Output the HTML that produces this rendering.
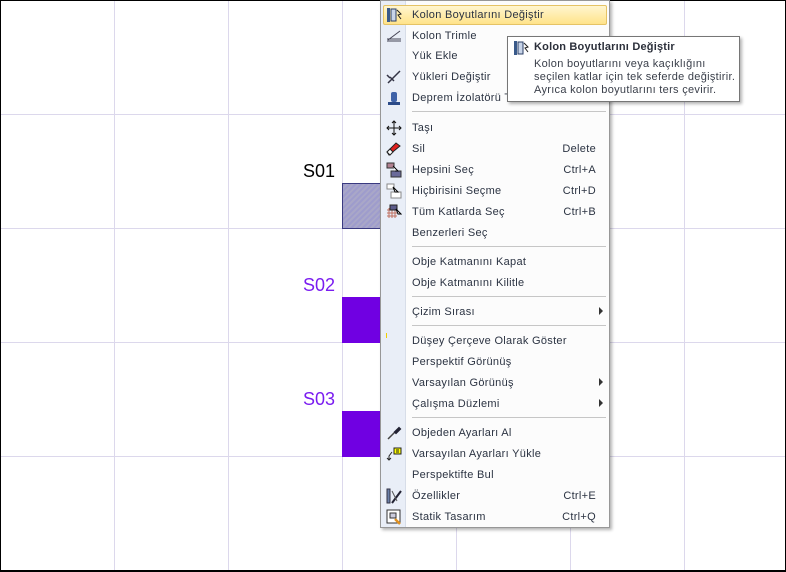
<!DOCTYPE html>
<html><head><meta charset="utf-8"><style>
*{margin:0;padding:0;box-sizing:border-box}
body{width:786px;height:572px;position:relative;overflow:hidden;background:#fff;font-family:"Segoe UI","Liberation Sans",sans-serif}
.frame{position:absolute;left:0;top:0;width:786px;height:572px;border:1px solid #000;border-bottom:2px solid #000}
.v{position:absolute;top:0;width:1px;height:572px;background:#dcd8ec}
.h{position:absolute;left:0;height:1px;width:786px;background:#dcd8ec}
.lbl{position:absolute;font-family:"Liberation Sans",sans-serif;font-size:18px}
.col{position:absolute;left:342px;width:40px;height:46px}
.menu{position:absolute;left:380px;top:0;width:230px;height:528px;background:#fcfcfc;border:1px solid #979797;box-shadow:2px 2px 3px rgba(0,0,0,.3)}
.gut{position:absolute;left:0;top:0;width:25px;height:100%;background:#e9eef7;border-right:1px solid #d7dde8}
.it{position:absolute;left:31px;font-size:11px;color:#2b3342;line-height:14px;font-family:"Liberation Sans",sans-serif;letter-spacing:0.3px}
.sc{position:absolute;right:13px;font-size:11px;color:#2b3342;line-height:14px;font-family:"Liberation Sans",sans-serif;letter-spacing:0.3px}
.sep{position:absolute;left:31px;right:3px;height:1px;background:#c6c6c6}
.arr{position:absolute;right:6px;width:0;height:0;border-left:4px solid #333;border-top:4px solid transparent;border-bottom:4px solid transparent}
.ic{position:absolute;left:5px;width:16px;height:16px}
.tip{position:absolute;left:507px;top:36px;width:233px;height:66px;background:#fff;border:1px solid #767676;box-shadow:2px 2px 3px rgba(0,0,0,.3);font-family:"Liberation Sans",sans-serif;font-size:11px;color:#3a3f4a;letter-spacing:0.3px}
</style></head><body>
<div class="v" style="left:114px"></div><div class="v" style="left:228px"></div><div class="v" style="left:342px"></div><div class="v" style="left:456px"></div><div class="v" style="left:570px"></div><div class="v" style="left:684px"></div>
<div class="h" style="top:114px"></div><div class="h" style="top:228px"></div><div class="h" style="top:342px"></div><div class="h" style="top:456px"></div>
<div class="lbl" style="left:303px;top:161px;color:#000">S01</div>
<div class="lbl" style="left:303px;top:275px;color:#7a1cf0">S02</div>
<div class="lbl" style="left:303px;top:389px;color:#7a1cf0">S03</div>
<div class="col" style="top:183px;height:46px;background:repeating-linear-gradient(135deg,#9e9ccc 0 2px,#a9a7c8 2px 4px);border:1px solid #3a3a80;border-right:none"></div>
<div class="col" style="top:297px;background:#7000e2"></div>
<div class="col" style="top:411px;background:#7000e2"></div>
<div class="frame"></div>
<div class="menu">
<div class="gut"></div>
<div style="position:absolute;left:2px;top:4px;width:224px;height:20px;background:linear-gradient(#fff6d0,#ffe38a);border:1px solid #e5c365;border-radius:2px"></div>
<svg class="ic" style="top:6px" viewBox="0 0 16 16"><rect x="1" y="1" width="3" height="14" fill="#3a5a8a"/><rect x="5" y="2" width="5" height="12" fill="#c8d4e8" stroke="#2b3f66"/><path d="M11 3l4 4-3 1 3 4" stroke="#222" fill="none"/></svg>
<div class="it" style="top:7px">Kolon Boyutlarını Değiştir</div>
<svg class="ic" style="top:27px" viewBox="0 0 16 16"><path d="M1 11h14M1 13h14M2 12L14 3" stroke="#445" fill="none"/></svg>
<div class="it" style="top:28px">Kolon Trimle</div>
<div class="it" style="top:48px">Yük Ekle</div>
<svg class="ic" style="top:68px" viewBox="0 0 16 16"><path d="M2 14L14 2M4 8l4 4M1 6l3 3" stroke="#334" stroke-width="1.5" fill="none"/></svg>
<div class="it" style="top:69px">Yükleri Değiştir</div>
<svg class="ic" style="top:89px" viewBox="0 0 16 16"><rect x="5" y="2" width="6" height="10" rx="2" fill="#3f62a8"/><rect x="2" y="12" width="12" height="3" fill="#2b4a88"/></svg>
<div class="it" style="top:90px">Deprem İzolatörü T</div>
<div class="sep" style="top:110px"></div>
<svg class="ic" style="top:119px" viewBox="0 0 16 16"><path d="M8 1v14M1 8h14M6 3l2-2 2 2M6 13l2 2 2-2M3 6l-2 2 2 2M13 6l2 2-2 2" stroke="#111" fill="none"/></svg>
<div class="it" style="top:120px">Taşı</div>
<svg class="ic" style="top:140px" viewBox="0 0 16 16"><path d="M3 14l-2-3 9-9 4 3z" fill="#e02020" stroke="#222"/><path d="M1 11l3 3 3-3-3-3z" fill="#fff" stroke="#222"/></svg>
<div class="it" style="top:141px">Sil</div><div class="sc" style="top:141px">Delete</div>
<svg class="ic" style="top:161px" viewBox="0 0 16 16"><rect x="1" y="1" width="7" height="5" fill="#b08090" stroke="#333"/><rect x="5" y="9" width="10" height="6" fill="#6a6a9a" stroke="#333"/><path d="M7 4l5 5-3 0" stroke="#000" fill="#fff"/></svg>
<div class="it" style="top:162px">Hepsini Seç</div><div class="sc" style="top:162px">Ctrl+A</div>
<svg class="ic" style="top:182px" viewBox="0 0 16 16"><rect x="1" y="1" width="7" height="5" fill="#fff" stroke="#888"/><rect x="5" y="9" width="10" height="6" fill="#fff" stroke="#888"/><path d="M7 4l5 5-3 0z" stroke="#000" fill="#fff"/></svg>
<div class="it" style="top:183px">Hiçbirisini Seçme</div><div class="sc" style="top:183px">Ctrl+D</div>
<svg class="ic" style="top:203px" viewBox="0 0 16 16"><path d="M1 6h10M1 9h10M1 12h10M3 4v10M6 4v10M9 4v10" stroke="#c07060"/><rect x="4" y="1" width="7" height="5" fill="#5a5a8a" stroke="#222"/><path d="M10 5l5 5h-3z" stroke="#000" fill="#fff"/></svg>
<div class="it" style="top:204px">Tüm Katlarda Seç</div><div class="sc" style="top:204px">Ctrl+B</div>
<div class="it" style="top:225px">Benzerleri Seç</div>
<div class="sep" style="top:245px"></div>
<div class="it" style="top:254px">Obje Katmanını Kapat</div>
<div class="it" style="top:275px">Obje Katmanını Kilitle</div>
<div class="sep" style="top:295px"></div>
<div class="it" style="top:304px">Çizim Sırası</div><div class="arr" style="top:306px"></div>
<div class="sep" style="top:324px"></div>
<div style="position:absolute;left:5px;top:332px;width:1px;height:5px;background:#f0d000"></div>
<div class="it" style="top:333px">Düşey Çerçeve Olarak Göster</div>
<div class="it" style="top:354px">Perspektif Görünüş</div>
<div class="it" style="top:375px">Varsayılan Görünüş</div><div class="arr" style="top:377px"></div>
<div class="it" style="top:396px">Çalışma Düzlemi</div><div class="arr" style="top:398px"></div>
<div class="sep" style="top:416px"></div>
<svg class="ic" style="top:424px" viewBox="0 0 16 16"><path d="M2 14l7-7" stroke="#444" stroke-width="1.5"/><path d="M9 7l4-4 1 1-4 4z" fill="#223" stroke="#223" stroke-width="2"/></svg>
<div class="it" style="top:425px">Objeden Ayarları Al</div>
<svg class="ic" style="top:445px" viewBox="0 0 16 16"><rect x="8" y="2" width="7" height="6" fill="#ff0" stroke="#222"/><path d="M10 4h3M10 6h3M6 6L3 10v4M1 12l2 2 2-2" stroke="#222" fill="none"/></svg>
<div class="it" style="top:446px">Varsayılan Ayarları Yükle</div>
<div class="it" style="top:467px">Perspektifte Bul</div>
<svg class="ic" style="top:487px" viewBox="0 0 16 16"><rect x="1" y="1" width="3" height="14" fill="#6a7fa8" stroke="#334"/><path d="M6 15L15 3" stroke="#223" stroke-width="2"/><path d="M6 3l5 10" stroke="#555"/></svg>
<div class="it" style="top:488px">Özellikler</div><div class="sc" style="top:488px">Ctrl+E</div>
<svg class="ic" style="top:508px" viewBox="0 0 16 16"><rect x="1" y="1" width="13" height="13" fill="#fff" stroke="#333"/><rect x="4" y="4" width="6" height="5" fill="#ccd" stroke="#333"/><path d="M9 10l5 5" stroke="#e09020" stroke-width="2.5"/></svg>
<div class="it" style="top:509px">Statik Tasarım</div><div class="sc" style="top:509px">Ctrl+Q</div>
</div>
<div class="tip">
<svg style="position:absolute;left:5px;top:3px" width="16" height="16" viewBox="0 0 16 16"><rect x="1" y="1" width="3" height="14" fill="#3a5a8a"/><rect x="5" y="2" width="5" height="12" fill="#c8d4e8" stroke="#2b3f66"/><path d="M11 3l4 4-3 1 3 4" stroke="#222" fill="none"/></svg>
<div style="position:absolute;left:26px;top:4px;font-weight:bold;color:#2b2f3a;letter-spacing:0.2px">Kolon Boyutlarını Değiştir</div>
<div style="position:absolute;left:26px;top:21px;line-height:13px">Kolon boyutlarını veya kaçıklığını<br>seçilen katlar için tek seferde değiştirir.<br>Ayrıca kolon boyutlarını ters çevirir.</div>
</div>
</body></html>
